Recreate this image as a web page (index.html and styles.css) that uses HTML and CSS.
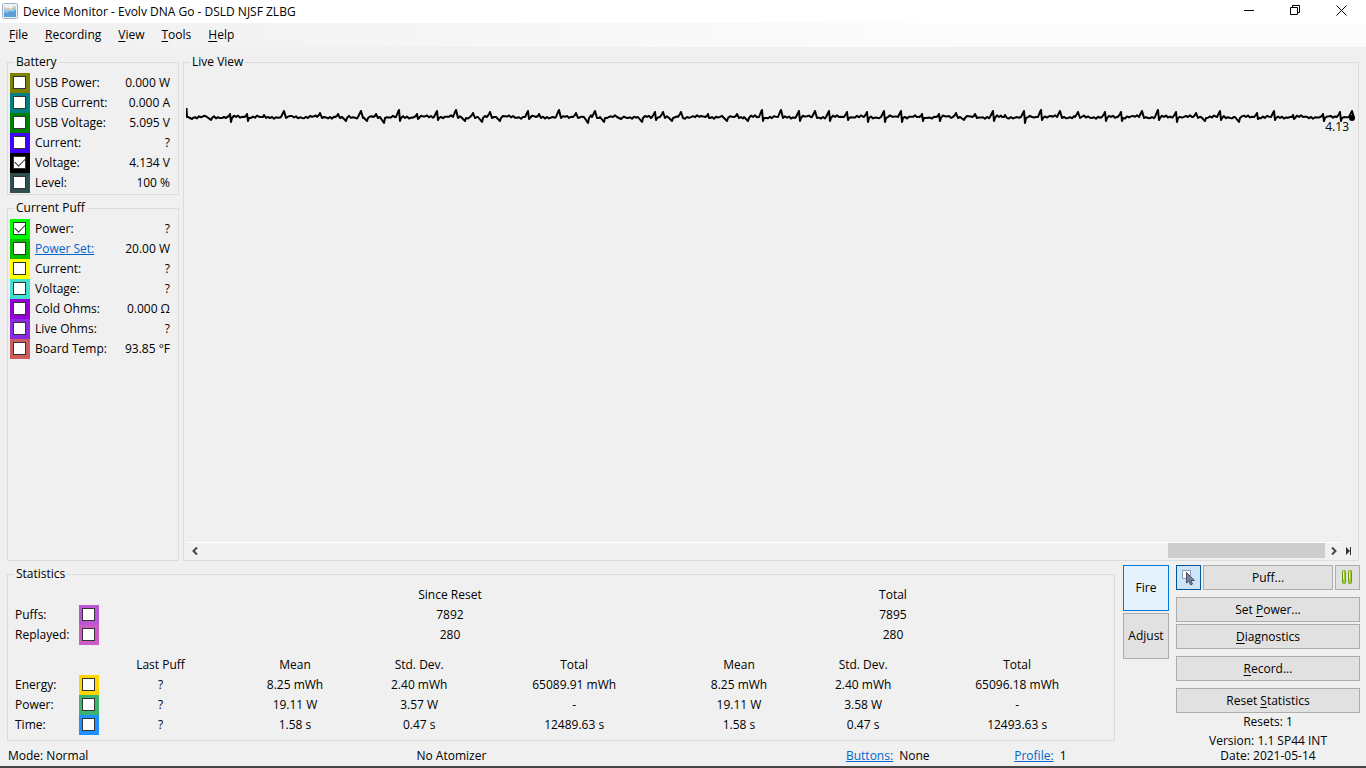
FILE: index.html
```
<!DOCTYPE html>
<html lang="en">
<head>
	<title>Device Monitor - Evolv DNA Go - DSLD NJSF ZLBG</title>
	<meta charset="utf-8">
	<link rel="stylesheet" href="styles.css">
</head>
<body>
<!-- title bar -->
<header class="titlebar">
	<svg class="app-icon" width="16" height="16" viewBox="0 0 16 16">
		<rect x="0.5" y="0.5" width="15" height="15" rx="1" fill="#edf1f8" stroke="#a3b0cb"/>
		<path d="M2 5L4 7L6 6L8 7L10 7L12 4L14 6V14H2Z" fill="#8cc3e8"/>
		<path d="M2 9L5 10L8 8L11 9L14 7V14H2Z" fill="#5a9fd6"/>
		<path d="M2 4L4 6L6 5L8 6L10 6L12 3L14 5" fill="none" stroke="#e8b876"/>
	</svg>
	<h1>Device Monitor - Evolv DNA Go - DSLD NJSF ZLBG</h1>
	<div class="controls">
		<button aria-label="Minimize"><svg width="11" height="11"><path d="M0 5.500H10"/></svg></button>
		<button aria-label="Restore"><svg width="11" height="11"><path d="M0.500 2.500H7.500V9.500H0.500ZM2.500 2.500V0.500H9.500V7.500H7.500"/></svg></button>
		<button aria-label="Close"><svg width="11" height="11"><path d="M0.500 0.500L10.500 10.500M10.500 0.500L0.500 10.500"/></svg></button>
	</div>
</header>
<nav class="menu">
	<button><u>F</u>ile</button>
	<button><u>R</u>ecording</button>
	<button><u>V</u>iew</button>
	<button><u>T</u>ools</button>
	<button><u>H</u>elp</button>
</nav>

<main>
	<div class="top">
		<div class="side">
			<fieldset>
				<legend>Battery</legend>
				<div class="row"><span class="chk olive"><input type="checkbox" id="b1"></span><label for="b1">USB Power:</label><output>0.000 W</output></div>
				<div class="row"><span class="chk teal"><input type="checkbox" id="b2"></span><label for="b2">USB Current:</label><output>0.000 A</output></div>
				<div class="row"><span class="chk green"><input type="checkbox" id="b3"></span><label for="b3">USB Voltage:</label><output>5.095 V</output></div>
				<div class="row"><span class="chk blue"><input type="checkbox" id="b4"></span><label for="b4">Current:</label><output>?</output></div>
				<div class="row"><span class="chk black"><input type="checkbox" id="b5" checked></span><label for="b5">Voltage:</label><output>4.134 V</output></div>
				<div class="row"><span class="chk slate"><input type="checkbox" id="b6"></span><label for="b6">Level:</label><output>100 %</output></div>
			</fieldset>
			<fieldset class="puff">
				<legend>Current Puff</legend>
				<div class="row"><span class="chk lime"><input type="checkbox" id="p1" checked></span><label for="p1">Power:</label><output>?</output></div>
				<div class="row"><span class="chk grass"><input type="checkbox" id="p2" aria-label="Power Set"></span><a href="#">Power Set:</a><output>20.00 W</output></div>
				<div class="row"><span class="chk yellow"><input type="checkbox" id="p3"></span><label for="p3">Current:</label><output>?</output></div>
				<div class="row"><span class="chk turquoise"><input type="checkbox" id="p4"></span><label for="p4">Voltage:</label><output>?</output></div>
				<div class="row"><span class="chk violet"><input type="checkbox" id="p5"></span><label for="p5">Cold Ohms:</label><output>0.000 Ω</output></div>
				<div class="row"><span class="chk purple"><input type="checkbox" id="p6"></span><label for="p6">Live Ohms:</label><output>?</output></div>
				<div class="row"><span class="chk red"><input type="checkbox" id="p7"></span><label for="p7">Board Temp:</label><output>93.85 °F</output></div>
			</fieldset>
		</div>
		<fieldset class="live">
			<legend>Live View</legend>
			<div class="live-in">
				<svg id="chart"></svg>
				<div class="scroll">
					<button aria-label="Scroll left"><svg width="6" height="8"><path d="M5 0.500L1.500 4L5 7.500"/></svg></button>
					<div class="track"><div class="thumb"></div></div>
					<button aria-label="Scroll right"><svg width="6" height="8"><path d="M1 0.500L4.500 4L1 7.500"/></svg></button>
					<button class="end" aria-label="Go to end"><svg width="6" height="8"><path class="solid" d="M0 0L4 4L0 8ZM4 0H5V8H4Z"/></svg></button>
				</div>
			</div>
		</fieldset>
	</div>

	<div class="bottom">
		<div class="left">
			<fieldset class="stats">
				<legend>Statistics</legend>
				<table>
					<colgroup>
						<col class="c-name"><col class="c-chk"><col class="c-last">
						<col class="c-mean"><col class="c-dev"><col class="c-total">
						<col class="c-mean"><col class="c-dev"><col>
					</colgroup>
					<tbody>
						<tr><td colspan="3"></td><th colspan="3">Since Reset</th><th colspan="3">Total</th></tr>
						<tr><th><label for="s1">Puffs:</label></th><td><span class="chk orchid"><input type="checkbox" id="s1"></span></td><td></td><td colspan="3">7892</td><td colspan="3">7895</td></tr>
						<tr><th><label for="s2">Replayed:</label></th><td><span class="chk pink"><input type="checkbox" id="s2"></span></td><td></td><td colspan="3">280</td><td colspan="3">280</td></tr>
						<tr class="space"><td colspan="9"></td></tr>
					</tbody>
					<tbody>
						<tr><td colspan="2"></td><th class="last">Last Puff</th><th>Mean</th><th>Std. Dev.</th><th>Total</th><th>Mean</th><th>Std. Dev.</th><th>Total</th></tr>
						<tr><th><label for="s3">Energy:</label></th><td><span class="chk gold"><input type="checkbox" id="s3"></span></td><td class="last">?</td><td>8.25 mWh</td><td>2.40 mWh</td><td>65089.91 mWh</td><td>8.25 mWh</td><td>2.40 mWh</td><td>65096.18 mWh</td></tr>
						<tr><th><label for="s4">Power:</label></th><td><span class="chk sea"><input type="checkbox" id="s4"></span></td><td class="last">?</td><td>19.11 W</td><td>3.57 W</td><td>-</td><td>19.11 W</td><td>3.58 W</td><td>-</td></tr>
						<tr><th><label for="s5">Time:</label></th><td><span class="chk sky"><input type="checkbox" id="s5"></span></td><td class="last">?</td><td>1.58 s</td><td>0.47 s</td><td>12489.63 s</td><td>1.58 s</td><td>0.47 s</td><td>12493.63 s</td></tr>
					</tbody>
				</table>
			</fieldset>
			<div class="status">
				<span>Mode: Normal</span>
				<span class="center">No Atomizer</span>
				<span><a href="#">Buttons:</a> None</span>
				<span><a href="#">Profile:</a> 1</span>
			</div>
		</div>
		<div class="modes">
			<button class="btn square on">Fire</button>
			<button class="btn square">Adjust</button>
		</div>
		<div class="actions">
			<div class="puff-row">
				<button class="btn picked" aria-label="Select">
					<svg width="15" height="17" viewBox="0 0 15 17">
						<rect x="1.500" y="1.500" width="8" height="8" fill="#fff" stroke="#8e9cc0"/>
						<path d="M5.500 3.500V14L8 12L9.500 16L11.500 15L10 11.500H13.500Z" fill="#78829a" stroke="#4d566c"/>
					</svg>
				</button>
				<button class="btn">Puf<u>f</u>...</button>
				<button class="btn" aria-label="Pause">
					<svg width="11" height="15" viewBox="0 0 11 15">
						<rect x="0.500" y="0.500" width="3" height="13" rx="1" fill="#a4d233" stroke="#6c9a1c"/>
						<rect x="6.500" y="0.500" width="3" height="13" rx="1" fill="#a4d233" stroke="#6c9a1c"/>
						<path d="M1.500 1V9M7.500 1V9" stroke="#e4f5ae"/>
					</svg>
				</button>
			</div>
			<button class="btn">Set <u>P</u>ower...</button>
			<button class="btn near"><u>D</u>iagnostics</button>
			<button class="btn"><u>R</u>ecord...</button>
			<button class="btn">Reset <u>S</u>tatistics</button>
			<p class="resets">Resets: 1</p>
			<p>Version: 1.1 SP44 INT<br>Date: 2021-05-14</p>
		</div>
	</div>
</main>
<div class="edge"></div>
<script src="chart.js"></script>
</body>
</html>
```
FILE: styles.css
```
* { box-sizing: border-box; }
body, h1, p, fieldset, legend { margin: 0; padding: 0; }
body { display: flex; flex-direction: column; min-height: 100vh; background-color: #f0f0f0; color: #000; font: 12px/16px "Open Sans", "Noto Sans", sans-serif; }
button { margin: 0; padding: 0; border: 0; background: none; color: #000; font: inherit; }
a { color: #0066cc; }
u { text-underline-offset: 2px; }

.titlebar { display: flex; height: 23px; padding: 0 2px; background-color: #fff; }
.titlebar h1 { flex: 1; margin-left: 5px; font-size: 12px; font-weight: 400; line-height: 23px; }
.app-icon { margin-top: 3px; }
.controls button { width: 46px; height: 21px; float: left; }
.controls svg, .scroll svg { display: block; margin: 0 auto; fill: none; stroke: #000; }
.menu { display: flex; gap: 17px; height: 24px; padding: 0 9px; background: linear-gradient(to right, #f0f0f0, #fcfcfc 70%); }

main { flex: 1; display: flex; flex-direction: column; gap: 4px; padding: 7px 6px 2px 7px; }
.top { flex: 1; display: flex; gap: 4px; padding-right: 1px; }
.side { display: flex; flex-direction: column; gap: 5px; width: 172px; }
.puff { flex: 1; }
fieldset { min-width: 0; padding: 3px 2px 1px; border: 1px solid #dcdcdc; }
legend { margin-left: 4px; padding: 0 2px; }

.row { display: flex; height: 20px; padding-right: 6px; line-height: 20px; }
.row label, .row a { flex: 1; margin-left: 5px; }
.chk { display: block; width: 20px; height: 20px; padding: 3px; }
.chk input { display: block; width: 13px; height: 13px; margin: 0; border: 1px solid #333; background-color: #fff; appearance: none; }
.chk input:checked:after { display: block; width: 9px; height: 5px; margin: 1px; border: solid #333; border-width: 0 0 1px 1px; content: ''; transform: rotate(-45deg); }
.olive { background-color: #808000; }
.teal { background-color: #008080; }
.green { background-color: #008000; }
.blue { background-color: #4000ff; }
.black { background-color: #000; }
.slate { background-color: #2f4f4f; }
.lime { background-color: #00ff00; }
.grass { background-color: #00c000; }
.yellow { background-color: #ffff00; }
.turquoise { background-color: #40e0d0; }
.violet { background-color: #9400d3; }
.purple { background-color: #8a2be2; }
.red { background-color: #cd5c5c; }
.orchid { background-color: #ba55d3; }
.pink { background-color: #cc5cc4; }
.gold { background-color: #ffd700; }
.sea { background-color: #3cb371; }
.sky { background-color: #1e90ff; }

.live { flex: 1; }
.live-in { display: flex; flex-direction: column; height: 100%; }
#chart { flex: 1; display: block; width: 100%; min-height: 0; }
#chart path { fill: none; stroke: #000; stroke-width: 2; stroke-linejoin: round; }
.scroll { display: flex; height: 17px; }
.scroll button { width: 17px; border-top: 1px solid #fff; }
.scroll svg { stroke: #444; stroke-width: 2; }
.scroll .solid { fill: #333; stroke: none; }
.scroll .end { width: 14px; border: 0; }
.track { flex: 1; padding-bottom: 1px; border-top: 1px solid #fff; }
.thumb { width: 14%; height: 100%; margin-left: auto; background-color: #cdcdcd; }

.bottom { display: flex; }
.left { flex: 1; }
.stats { margin-top: 1px; padding: 3px 0 5px 7px; }
.stats legend { margin-left: -1px; }
table { width: 100%; table-layout: fixed; border-collapse: collapse; }
th, td { height: 20px; padding: 0; font-weight: 400; text-align: center; line-height: 20px; }
th:first-child { text-align: left; }
.space td { height: 10px; }
.last { padding-right: 6px; }
.c-name { width: 64px; }
.c-chk { width: 20px; }
.c-last { width: 129px; }
.c-mean { width: 12.2%; }
.c-dev { width: 10.4%; }
.c-total { width: 17.8%; }

.status { display: grid; grid-template-columns: 20% 55.7% 15.2% 1fr; margin-top: 7px; padding-left: 1px; }
.status .center { width: 72%; text-align: center; }
.status a { margin-right: 3px; }

.btn { height: 25px; border: 1px solid #adadad; background-color: #e1e1e1; }
.btn svg { display: block; margin: 0 auto; }
.modes { display: flex; flex-direction: column; gap: 2px; width: 46px; margin: 0 7px 0 8px; }
.square { height: 46px; }
.on { border-color: #0078d7; background-color: #e5f1fb; }
.picked { border-color: #005499; background-color: #cce4f7; }
.actions { display: flex; flex-direction: column; gap: 7px; width: 184px; text-align: center; }
.puff-row { display: grid; grid-template-columns: 25px 1fr 25px; gap: 2px; }
.near { margin-top: -5px; }
.actions p { line-height: 15px; }
.actions .resets { margin: -6px 0 -3px; }
.edge { height: 2px; background-color: #464646; }
```
FILE: chart.js
```
// voltage peaks: [x, rise, drop] in pixels on a 1166 wide trace
var peaks = [
	[5, 0, 2], [24, 0, 3], [44, 3, 5], [61, 3, 4], [78, 2, 0], [98, 6, 0], [134, 4, 0], [152, 3, 0],
	[159, 0, 4], [175, 6, 0], [180, 0, 4], [190, 3, 0], [197, 0, 6], [213, 7, 4], [231, 3, 2],
	[251, 6, 3], [270, 7, 0], [278, 0, 4], [287, 4, 0], [295, 0, 5], [304, 5, 0], [313, 0, 4],
	[342, 6, 2], [353, 3, 0], [373, 7, 0], [390, 4, 0], [401, 0, 6], [409, 6, 0], [417, 0, 5],
	[434, 0, 2], [455, 0, 5], [469, 5, 3], [477, 5, 0], [485, 0, 4], [495, 5, 0], [522, 3, 1],
	[540, 0, 4], [551, 3, 0], [561, 0, 4], [576, 7, 4], [595, 7, 0], [613, 6, 4], [629, 6, 0],
	[643, 6, 4], [661, 5, 3], [681, 5, 5], [698, 6, 5], [715, 6, 5], [736, 3, 4], [753, 3, 4],
	[770, 4, 0], [777, 0, 3], [789, 3, 0], [807, 6, 4], [819, 2, 0], [838, 6, 6], [855, 7, 3],
	[874, 6, 0], [892, 5, 0], [919, 5, 4], [935, 5, 4], [956, 6, 0], [972, 7, 3], [990, 5, 5],
	[1010, 4, 0], [1018, 0, 4], [1034, 6, 3], [1052, 0, 5], [1071, 4, 2], [1088, 6, 3],
	[1107, 2, 2], [1137, 3, 4], [1154, 5, 4], [1166, 6, 0]
];

function draw(){
	var oChart = document.getElementById('chart');
	var scale = (oChart.clientWidth - 4) / 1166;
	var base = 44;
	var pts = ['0.5 35', '1 ' + base];
	var x = 3;
	peaks.forEach(function(p){
		for(; x < p[0] - 3; x += 2){
			pts.push(x * scale + ' ' + (base + Math.sin(x * 1.3) * 0.9 + Math.sin(x * 0.23) * 0.9));
		}
		pts.push((p[0] - 3) * scale + ' ' + base);
		if(p[1]) pts.push((p[0] - 1) * scale + ' ' + (base - p[1] + 2), p[0] * scale + ' ' + (base - p[1]));
		if(p[2]) pts.push((p[0] + 1) * scale + ' ' + (base + p[2]));
		pts.push((p[0] + 2) * scale + ' ' + (base + 1));
		x = p[0] + 4;
	});
	var end = 1166 * scale;
	oChart.innerHTML = '<path d="M' + pts.join('L') + '"/>' +
		'<circle cx="' + end + '" cy="45" r="3"/>' +
		'<text x="' + (end - 3) + '" y="58" text-anchor="end">4.13</text>';
}
draw();
window.onresize = draw;
```
